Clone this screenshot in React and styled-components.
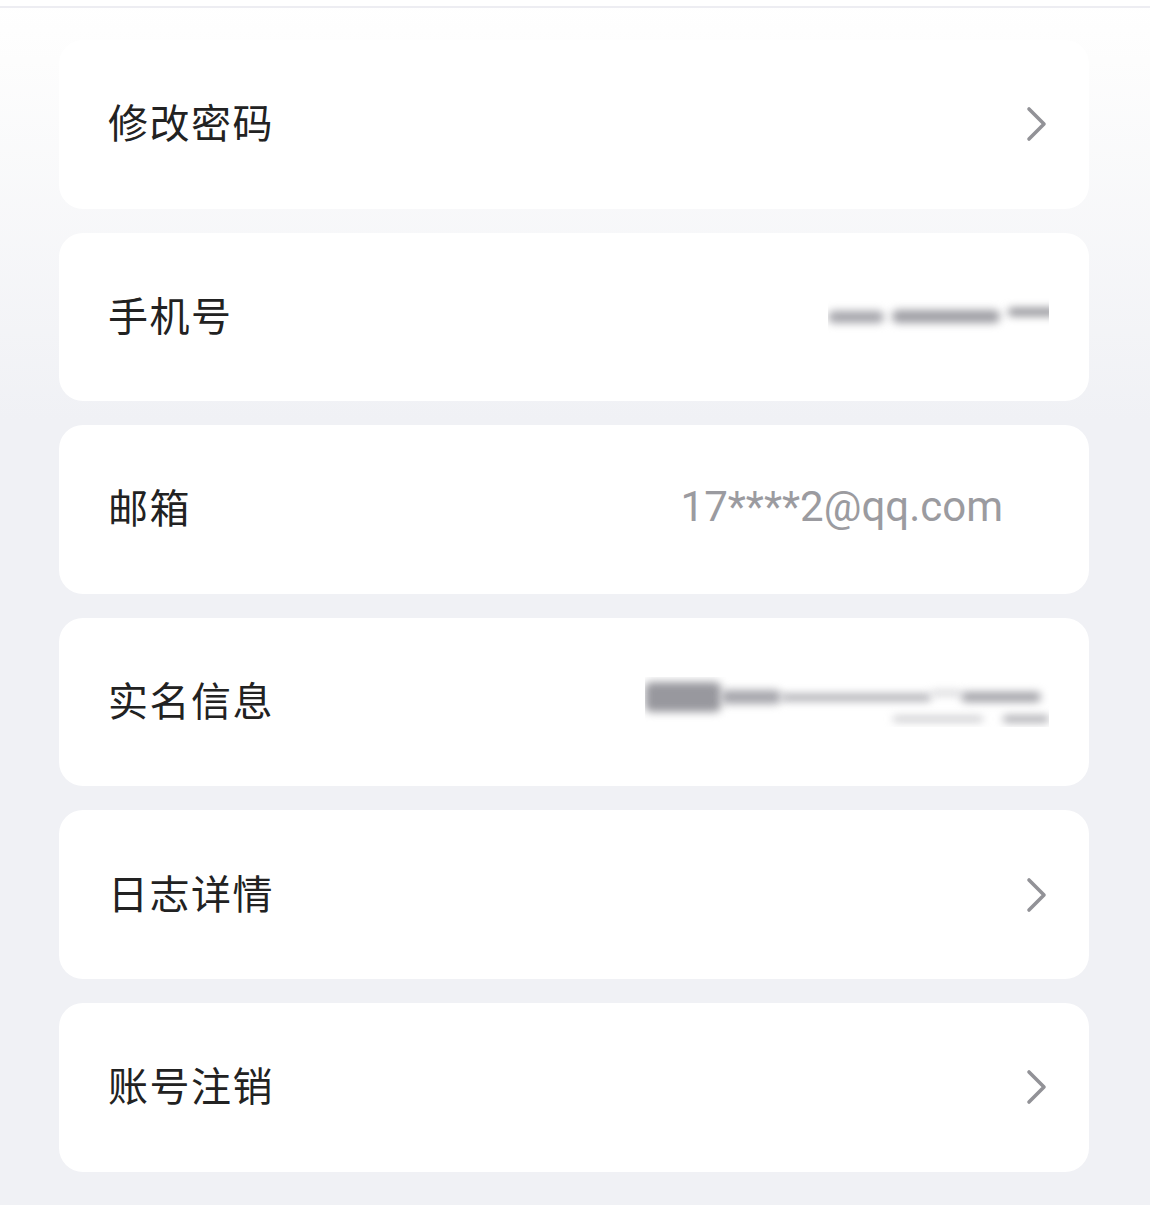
import styled, {createGlobalStyle} from "styled-components";

const GlobalStyle = createGlobalStyle`
  html, body {
    margin: 0;
    padding: 0;
  }
  body {
    font-family: "Noto Sans CJK SC", "Noto Sans", sans-serif;
    background: #f0f1f5;
  }
`

const Page = styled.div`
  width: 1150px;
  min-height: 1205px;
  box-sizing: border-box;
  background: linear-gradient(180deg, #ffffff 0px, #fdfdfd 60px, #f0f1f5 420px, #f0f1f5 100%);
`

const TopLine = styled.div`
  height: 6px;
  border-bottom: 2px solid #ededf2;
  background: #ffffff;
`

const List = styled.div`
  display: flex;
  flex-direction: column;
  gap: 24px;
  padding: 32px 61px 0 59px;
`

const Card = styled.div`
  height: 168.6px;
  border-radius: 24px;
  background: #ffffff;
  display: flex;
  align-items: center;
  justify-content: space-between;
  padding: 0 40px 0 49px;
  box-sizing: border-box;
`

const Label = styled.div`
  font-size: 40px;
  line-height: 1;
  color: #222222;
  letter-spacing: 1.5px;
  padding-bottom: 6px;
`

const Value = styled.div`
  font-family: Roboto, "Liberation Sans", sans-serif;
  font-size: 42px;
  line-height: 1;
  color: #9b9ba0;
  margin-right: 46px;
  padding-bottom: 4px;
`

const Blurred = styled.div`
  width: ${p => p.w}px;
  height: 50px;
  overflow: hidden;
  display: flex;
  flex-direction: column;
  justify-content: center;
  gap: 4px;
`

const MaskRow = styled.div`
  display: flex;
  align-items: center;
  justify-content: ${p => p.end ? 'flex-end' : 'flex-start'};
  gap: ${p => p.gap || 0}px;
`

const Smudge = styled.span`
  flex: none;
  width: ${p => p.w}px;
  height: ${p => p.h}px;
  margin-bottom: ${p => p.lift || 0}px;
  border-radius: 6px;
  background: ${p => p.c || '#9a9aa0'};
  filter: blur(4px);
`

const Chevron = () => (
    <svg width="24" height="36" viewBox="0 0 24 36" fill="none">
        <path d="M4 3 L19 18 L4 33" stroke="#929297" strokeWidth="3.6" strokeLinecap="round" strokeLinejoin="round"/>
    </svg>
)

const PhoneMask = () => (
    <Blurred w={221}>
        <MaskRow gap={8}>
            <Smudge w={56} h={12} c="#a4a4aa"/>
            <Smudge w={108} h={13} c="#9e9ea4"/>
            <Smudge w={50} h={8} lift={10} c="#8d8d93"/>
        </MaskRow>
    </Blurred>
)

const NameMask = () => (
    <Blurred w={404}>
        <MaskRow>
            <Smudge w={76} h={30} c="#98989e"/>
            <Smudge w={60} h={14} c="#a6a6ac"/>
            <Smudge w={150} h={7} c="#a8a8ae"/>
            <Smudge w={30} h={4} lift={8} c="#c4c4c8"/>
            <Smudge w={80} h={10} c="#a0a0a6"/>
        </MaskRow>
        <MaskRow end gap={20}>
            <Smudge w={90} h={4} c="#b0b0b5"/>
            <Smudge w={46} h={6} c="#9a9aa0"/>
        </MaskRow>
    </Blurred>
)

const rows = [
    {label: '修改密码', arrow: true},
    {label: '手机号', extra: <PhoneMask/>},
    {label: '邮箱', extra: <Value>17****2@qq.com</Value>},
    {label: '实名信息', extra: <NameMask/>},
    {label: '日志详情', arrow: true},
    {label: '账号注销', arrow: true},
]

const App = () => {
    return (
        <Page>
            <GlobalStyle/>
            <TopLine/>
            <List>
                {rows.map(row => (
                    <Card key={row.label}>
                        <Label>{row.label}</Label>
                        {row.arrow ? <Chevron/> : row.extra}
                    </Card>
                ))}
            </List>
        </Page>
    )
}

export default App;
